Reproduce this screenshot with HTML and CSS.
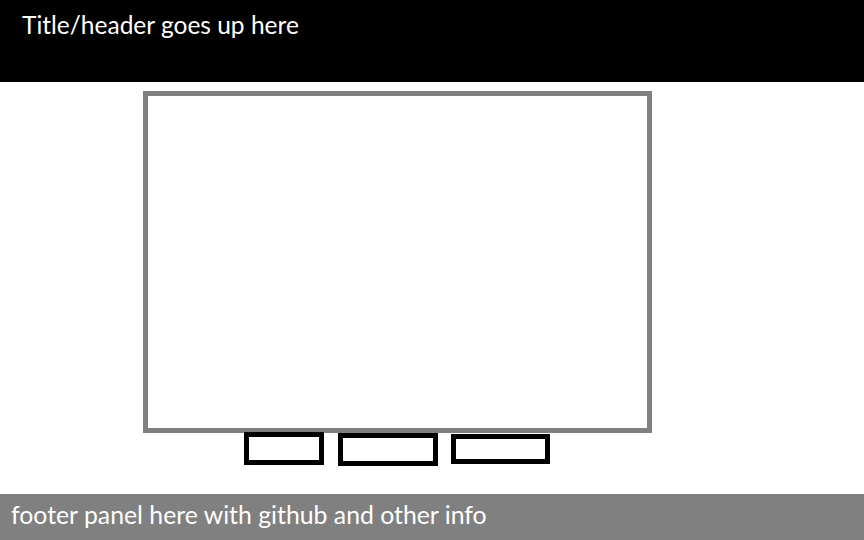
FILE: index.html
```html
<!DOCTYPE html>
<html>
<head>
<meta charset="utf-8">
<link rel="stylesheet" href="styles.css">
</head>
<body>
<div class="page">
  <header class="header">Title/header goes up here</header>
  <main class="main">
    <div class="canvas"></div>
    <div class="controls">
      <div class="btn btn-a"></div>
      <div class="btn btn-b"></div>
      <div class="btn btn-c"></div>
    </div>
  </main>
  <footer class="footer">footer panel here with github and other info</footer>
</div>
</body>
</html>
```
FILE: styles.css
```css
html, body {
  margin: 0;
  padding: 0;
  background: #ffffff;
}
.page {
  width: 864px;
  height: 540px;
  display: flex;
  flex-direction: column;
  font-family: Lato, "Open Sans", sans-serif;
}
.header {
  height: 82px;
  box-sizing: border-box;
  background: #000000;
  color: #ffffff;
  font-size: 24.5px;
  line-height: 30px;
  padding: 10px 0 0 22px;
}
.main {
  padding-left: 143px;
  padding-top: 9px;
  display: flex;
  flex-direction: column;
}
.canvas {
  width: 509px;
  height: 342px;
  box-sizing: border-box;
  border: 5px solid #808080;
}
.controls {
  display: flex;
  align-items: flex-start;
  margin-top: -1px;
  margin-left: 101px;
}
.btn {
  box-sizing: border-box;
  border: 5px solid #000000;
  background: #ffffff;
}
.btn-a { width: 80px; height: 33px; }
.btn-b { width: 100px; height: 33px; margin-left: 14px; margin-top: 1px; }
.btn-c { width: 99px; height: 30px; margin-left: 13px; margin-top: 2px; }
.footer {
  margin-top: auto;
  height: 46px;
  box-sizing: border-box;
  background: #808080;
  color: #ffffff;
  font-size: 24.8px;
  line-height: 30px;
  padding: 6px 0 0 11px;
}
```
